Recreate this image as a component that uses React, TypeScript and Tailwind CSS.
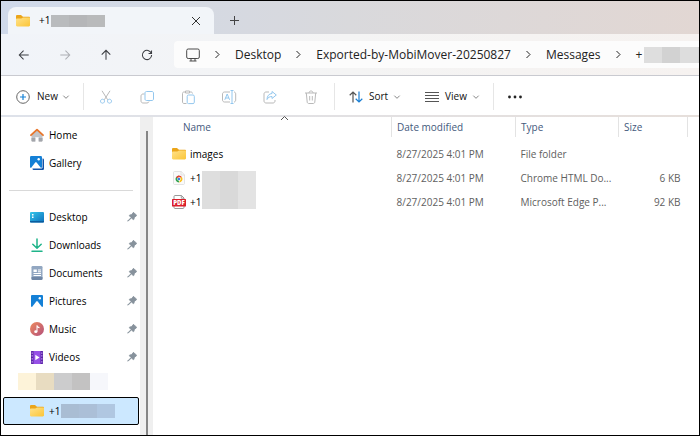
import React, { useState } from "react";

type IconProps = { className?: string };
type QuickLink = { name: string; icon: React.FC<IconProps> };
type FileRow = {
  name: string;
  icon: React.FC<IconProps>;
  modified: string;
  type: string;
  size: string;
  mask?: string;
};

const FolderIcon: React.FC<IconProps> = ({ className }) => (
  <svg viewBox="0 0 14 12" className={className} aria-hidden="true">
    <path d="M0 1.2C0 .5.5 0 1.2 0h3.3c.4 0 .7.1 1 .4L7 1.7h5.8c.7 0 1.2.5 1.2 1.2V6H0z" fill="#eba51a" />
    <path d="M0 4.300c0-.5.4-.8.8-.8h4.400c.4 0 .7-.1 1-.4l.5-.4c.2-.2.5-.3.8-.3h5.5c.6 0 1 .4 1 1v6.8c0 .7-.5 1.200-1.200 1.200H1.200C.5 11.400 0 10.900 0 10.200z" fill="url(#folderFill)" />
    <defs>
      <linearGradient id="folderFill" x1="0" y1="0" x2="1" y2="1">
        <stop offset="0" stopColor="#ffe28c" />
        <stop offset="1" stopColor="#fbc537" />
      </linearGradient>
    </defs>
  </svg>
);

const HomeIcon: React.FC<IconProps> = ({ className }) => (
  <svg viewBox="0 0 14 14" className={className} aria-hidden="true">
    <path d="M1.500 6.500 7 2l5.500 4.500V12.500c0 .6-.4 1-1 1H8.700V9.300H5.300v4.200H2.500c-.6 0-1-.4-1-1z" fill="#c2c4c8" />
    <path d="M1.500 10h3.800v3.500H2.500c-.6 0-1-.4-1-1zM8.700 10h3.800v2.500c0 .6-.4 1-1 1H8.700z" fill="#a3a6ab" />
    <path d="M1 7.200 7 1.700l6 5.500" fill="none" stroke="#e8752a" strokeWidth="1.800" strokeLinecap="round" strokeLinejoin="round" />
  </svg>
);

const GalleryIcon: React.FC<IconProps> = ({ className }) => (
  <svg viewBox="0 0 14 14" className={className} aria-hidden="true">
    <rect x="2.500" y="2.500" width="11.500" height="11.500" rx="1.200" fill="#1253a8" />
    <rect x="0" y="0" width="12.500" height="12.500" rx="1.200" fill="#fff" />
    <rect x="0" y="0" width="12" height="12" rx="1.200" fill="#1480d6" />
    <path d="M1 12 5.200 6.600c.4-.5 1-.5 1.400 0L11 12z" fill="#fff" />
    <circle cx="8.700" cy="3.300" r="1.200" fill="#fff" />
  </svg>
);

const DesktopIcon: React.FC<IconProps> = ({ className }) => (
  <svg viewBox="0 0 14 14" className={className} aria-hidden="true">
    <defs>
      <linearGradient id="desktopFill" x1="0" y1="0" x2="1" y2="1">
        <stop offset="0" stopColor="#35c7ea" />
        <stop offset="1" stopColor="#0c6fbd" />
      </linearGradient>
    </defs>
    <rect x="0" y="2" width="14" height="10.500" rx="1" fill="url(#desktopFill)" />
    <path d="M2 4h1.500v1.500H2zM2 6.500h1.500V8H2z" fill="#fff" />
    <path d="M0 11h14v.5c0 .6-.4 1-1 1H1c-.6 0-1-.4-1-1z" fill="#0b5c9e" />
  </svg>
);

const DownloadsIcon: React.FC<IconProps> = ({ className }) => (
  <svg viewBox="0 0 14 14" className={className} fill="none" stroke="#1fb489" strokeWidth="1.500" strokeLinecap="round" strokeLinejoin="round" aria-hidden="true">
    <path d="M7 1v9M2.800 6.200 7 10.200l4.200-4M2 13.200h10" />
  </svg>
);

const DocumentsIcon: React.FC<IconProps> = ({ className }) => (
  <svg viewBox="0 0 14 14" className={className} aria-hidden="true">
    <rect x="1.500" y="0" width="11" height="14" rx="1.200" fill="#92a7c1" />
    <path d="M1.500 11h11v1.800c0 .7-.5 1.200-1.200 1.200H2.700c-.7 0-1.200-.5-1.200-1.200z" fill="#6f86a5" />
    <path d="M3.500 3.500h3.300V6H3.500zM8 3.500h3V4.500H8zM8 5.200h3V6.200H8zM3.500 7H11v1H3.500zM3.500 9H11v1H3.500z" fill="#fff" />
  </svg>
);

const PicturesIcon: React.FC<IconProps> = ({ className }) => (
  <svg viewBox="0 0 14 14" className={className} aria-hidden="true">
    <rect x="1" y="1" width="12" height="12" rx="1" fill="#1480d6" />
    <path d="M2 13 6.300 7.500c.4-.5 1-.5 1.400 0L12 13z" fill="#fff" />
    <circle cx="9.800" cy="4.200" r="1.200" fill="#fff" />
  </svg>
);

const MusicIcon: React.FC<IconProps> = ({ className }) => (
  <svg viewBox="0 0 14 14" className={className} aria-hidden="true">
    <defs>
      <linearGradient id="musicFill" x1="0" y1="0" x2="1" y2="1">
        <stop offset="0" stopColor="#ee8a5c" />
        <stop offset="1" stopColor="#b3507c" />
      </linearGradient>
    </defs>
    <circle cx="7" cy="7" r="7" fill="url(#musicFill)" />
    <ellipse cx="5.800" cy="9.700" rx="1.600" ry="1.400" fill="#fff" />
    <path d="M6.500 3.200h1c.1 1 1 1.500 2 1.700v1.300c-.8 0-1.500-.3-2-.7v4.200h-1z" fill="#fff" />
  </svg>
);

const VideosIcon: React.FC<IconProps> = ({ className }) => (
  <svg viewBox="0 0 14 14" className={className} aria-hidden="true">
    <rect x="1" y="1" width="12" height="13" rx="1" fill="#9650e6" />
    <path d="M1 2c0-.6.4-1 1-1h1.500v13H2c-.6 0-1-.4-1-1zM10.500 1H12c.6 0 1 .4 1 1v11c0 .6-.4 1-1 1h-1.500z" fill="#5b24a6" />
    <path d="M1.600 2.500h1.200v1.200H1.600zM1.600 5.300h1.200v1.200H1.600zM1.600 8.200h1.200v1.200H1.600zM1.600 11.200h1.200v1.200H1.600zM11.200 2.500h1.200v1.200h-1.200zM11.200 5.300h1.200v1.200h-1.200zM11.200 8.200h1.200v1.200h-1.200zM11.200 11.200h1.200v1.200h-1.200z" fill="#c9a4f5" />
    <path d="M5.300 4.800v5.400l4.300-2.700z" fill="#fff" />
  </svg>
);

const PinIcon: React.FC<IconProps> = ({ className }) => (
  <svg viewBox="0 0 10 10" className={className} aria-hidden="true">
    <path d="M6 .7c.3-.3.7-.3 1 0l2.300 2.300c.3.3.3.7 0 1L7.500 5.200 6.900 7.300c-.1.4-.5.5-.8.2L4.400 5.900 1 9.300l-.3-.3 3.400-3.400-1.600-1.700c-.3-.3-.2-.7.2-.8l2.100-.6z" fill="#87929c" stroke="#87929c" strokeWidth=".8" />
  </svg>
);

const ChromeFileIcon: React.FC<IconProps> = ({ className }) => (
  <svg viewBox="0 0 14 14" className={className} aria-hidden="true">
    <path d="M2.500.5h6.700l3.300 3.300v8.700c0 .6-.4 1-1 1h-9c-.6 0-1-.4-1-1v-11c0-.6.4-1 1-1z" fill="#fafafa" stroke="#dcdcdc" strokeWidth=".8" />
    <path d="M9 .5v3.500h3.500" fill="none" stroke="#dcdcdc" strokeWidth=".8" />
    <path d="M7 8V4.500L3.970 6.250a3.500 3.500 0 0 0 3.030 5.250z" fill="#34a352" />
    <path d="M10.030 6.250A3.500 3.500 0 0 1 7 11.500L8.400 8.500 7 6.250z" fill="#fbc116" />
    <path d="M3.970 6.250a3.500 3.500 0 0 1 6.060 0H7L7 8z" fill="#e34133" />
    <circle cx="7" cy="8" r="1.700" fill="#fff" />
    <circle cx="7" cy="8" r="1.250" fill="#3f7fea" />
  </svg>
);

const PdfFileIcon: React.FC<IconProps> = ({ className }) => (
  <svg viewBox="0 0 14 14" className={className} aria-hidden="true">
    <path d="M2 5V1.500c0-.5.4-1 1-1h6.500L12 3v2M2 10v2.500c0 .5.4 1 1 1h8c.6 0 1-.5 1-1V10" fill="#fff" stroke="#8d8d8d" strokeWidth=".9" />
    <path d="M9.300.5V3.200H12" fill="none" stroke="#8d8d8d" strokeWidth=".8" />
    <rect x="0" y="4" width="14" height="7.500" rx=".5" fill="#dc1f2b" />
    <text x="7" y="10" textAnchor="middle" fontSize="6" fontWeight="800" fontFamily="Open Sans, sans-serif" fill="#fff">PDF</text>
  </svg>
);

const Chevron: React.FC<{ direction: "right" | "down" | "up"; className?: string }> = ({ direction, className }) => {
  const paths = { right: "M2.500 1 6 4.500 2.500 8", down: "M1.500 3 4.500 6 7.500 3", up: "M1 6 4.500 2.500 8 6" };
  return (
    <svg viewBox="0 0 9 9" className={className} fill="none" stroke="currentColor" aria-hidden="true">
      <path d={paths[direction]} />
    </svg>
  );
};

const navButtons = [
  { label: "Back", color: "text-[#3b3d42]", d: "M12.500 7h-11M6.500 2l-5 5 5 5" },
  { label: "Forward", color: "text-[#acaeb3]", d: "M1.500 7h11M7.500 2l5 5-5 5" },
  { label: "Up", color: "text-[#3b3d42]", d: "M7 12.500v-11M2 6.500l5-5 5 5" },
  { label: "Refresh", color: "text-[#3b3d42]", d: "M12.100 5.200A5.400 5.400 0 1 0 12.400 7M12.300 1.800v3.500H8.800" },
];

const fileActions = [
  { label: "Cut", gray: "M3 .8l5.700 9M11 .8l-5.700 9", blue: "M3.500 9.200a2 2 0 1 0 .01 0zM10.500 9.200a2 2 0 1 0 .01 0z" },
  { label: "Copy", gray: "M4.500 4H3C2 4 1 4.800 1 6v5c0 1.200.9 2 2 2h4c1 0 1.800-.6 2-1.500", blue: "M6.500 1.500H12c.8 0 1.500.6 1.500 1.500v6c0 .8-.6 1.500-1.500 1.500H6.500C5.600 10.500 5 9.900 5 9V3c0-.9.6-1.500 1.500-1.500z" },
  { label: "Paste", gray: "M5.500 13.500H3c-.8 0-1.500-.6-1.500-1.500V3.500C1.500 2.600 2.100 2 3 2h1M9 2h1c.8 0 1.500.6 1.500 1.500M4.500 1h4v2h-4z", blue: "M7.500 5H12c.8 0 1.300.5 1.300 1.300v6c0 .8-.5 1.300-1.300 1.300H7.500c-.8 0-1.300-.5-1.300-1.300v-6C6.200 5.500 6.700 5 7.500 5z" },
  { label: "Rename", gray: "M8 2H2.500C1.400 2 .5 2.900.5 4v6c0 1.100.9 2 2 2H8M12 2c1 0 1.700.9 1.700 2v6c0 1.100-.7 2-1.700 2", blue: "M8.500.5h3M8.500 13.500h3M10 .5v13M2.800 9.800 5.200 4l2.400 5.800M3.600 8h3.200" },
  { label: "Share", gray: "M6 2H3C1.900 2 1 2.900 1 4v7c0 1.100.9 2 2 2h7c1.100 0 2-.9 2-2v-1", blue: "M9 1.500 13.300 5 9 8.500v-2C6.500 6.500 5 7.500 4 9.500c0-3.500 2-5.800 5-6z" },
  { label: "Delete", gray: "M1 3h12M5 3c0-2.700 4-2.700 4 0M2.300 3l.9 9c.1.900.7 1.500 1.500 1.500h4.600c.8 0 1.400-.6 1.500-1.500l.9-9M5.700 6v4.500M8.300 6v4.500", blue: "" },
];

const quickAccess: QuickLink[] = [
  { name: "Desktop", icon: DesktopIcon },
  { name: "Downloads", icon: DownloadsIcon },
  { name: "Documents", icon: DocumentsIcon },
  { name: "Pictures", icon: PicturesIcon },
  { name: "Music", icon: MusicIcon },
  { name: "Videos", icon: VideosIcon },
];

const files: FileRow[] = [
  { name: "images", icon: FolderIcon, modified: "8/27/2025 4:01 PM", type: "File folder", size: "" },
  { name: "+1", icon: ChromeFileIcon, modified: "8/27/2025 4:01 PM", type: "Chrome HTML Do...", size: "6 KB", mask: "self-end" },
  { name: "+1", icon: PdfFileIcon, modified: "8/27/2025 4:01 PM", type: "Microsoft Edge P...", size: "92 KB", mask: "self-start" },
];

const Blocks: React.FC<{ colors: string[]; className?: string }> = ({ colors, className }) => (
  <span className={`flex shrink-0 ${className || ""}`} aria-hidden="true">
    {colors.map((c, i) => (
      <span key={i} className={`w-[18px] ${c}`}></span>
    ))}
  </span>
);

const Divider: React.FC = () => <span className="w-px h-[27px] bg-[#e6e6e6]"></span>;

const TabStrip: React.FC = () => (
  <div className="flex items-end h-[33px] pl-[7px] bg-linear-to-r from-[#cfd9ea] via-[#d9d9dc] to-[#e2d7d3]">
    <div className="flex items-center w-[206px] h-[27px] pl-2 pr-[13px] rounded-t-lg bg-[#f2f5f9]">
      <FolderIcon className="w-[14px] h-3 mr-[9px]" />
      <span className="text-[10px] font-medium">+1</span>
      <Blocks colors={["bg-[#b9bbbd]", "bg-[#b5b6b8]", "bg-[#b9babb]"]} className="h-3 ml-px" />
      <button aria-label="Close tab" className="ml-auto">
        <svg viewBox="0 0 10 10" className="size-[10px]" fill="none" stroke="#333">
          <path d="M1 1l8 8M9 1 1 9" />
        </svg>
      </button>
    </div>
    <button aria-label="New tab" className="h-[27px] ml-4">
      <svg viewBox="0 0 9 9" className="size-[9px]" fill="none" stroke="#444">
        <path d="M4.500 0v9M0 4.500h9" />
      </svg>
    </button>
  </div>
);

const AddressBar: React.FC = () => (
  <div className="flex items-center h-[41px] pl-3 bg-linear-to-r from-[#f1f4f9] via-[#f4f4f4] to-[#f6f2f0]">
    <div className="flex gap-5 shrink-0">
      {navButtons.map((b) => (
        <button key={b.label} aria-label={b.label} className={`w-[21px] flex justify-center ${b.color}`}>
          <svg viewBox="0 0 14 14" className="size-3" fill="none" stroke="currentColor" strokeWidth="1.200">
            <path d={b.d} />
          </svg>
        </button>
      ))}
    </div>
    <nav aria-label="Address" className="flex grow items-center gap-[13px] min-w-0 h-[27px] ml-[17px] pl-3 overflow-hidden rounded-l bg-[#fcfcfc] text-xs text-[#222] whitespace-nowrap">
      <svg viewBox="0 0 14 14" className="size-[14px] shrink-0" fill="none" stroke="#4a4a4a" aria-hidden="true">
        <rect x=".7" y="1" width="12.600" height="9.500" rx="1.500" />
        <path d="M5 10.500v2.500M9 10.500v2.500M3.500 13h7" />
      </svg>
      <Chevron direction="right" className="size-[9px] shrink-0" />
      <a href="#desktop">Desktop</a>
      <Chevron direction="right" className="size-[9px] shrink-0" />
      <a href="#exported">Exported-by-MobiMover-20250827</a>
      <Chevron direction="right" className="size-[9px] shrink-0" />
      <a href="#messages">Messages</a>
      <Chevron direction="right" className="size-[9px] shrink-0" />
      <span className="flex items-center gap-[2px]">
        +
        <Blocks colors={["bg-[#dedede]", "bg-[#d2d2d2]", "bg-[#dddddd]", "bg-[#d6d6d6]"]} className="h-4" />
      </span>
    </nav>
  </div>
);

const Toolbar: React.FC = () => (
  <div className="flex items-center h-10 pl-[15px] pt-[2px] border-t border-[#c9cad0] bg-white text-[10px] text-[#111]">
    <button className="flex items-center">
      <svg viewBox="0 0 14 14" className="size-[14px] mr-[7px]" fill="none" aria-hidden="true">
        <circle cx="7" cy="7" r="6.300" stroke="#666" />
        <path d="M7 4v6M4 7h6" stroke="#1683d8" strokeWidth="1.200" />
      </svg>
      New
      <Chevron direction="down" className="size-2 ml-1 text-[#777]" />
    </button>
    <span className="flex ml-[13px]">
      <Divider />
    </span>
    <div className="flex gap-5 ml-3">
      {fileActions.map((a) => (
        <button key={a.label} aria-label={a.label} disabled className="w-[21px] flex justify-center">
          <svg viewBox="0 0 14 14" className="size-[14px] overflow-visible" fill="none" strokeWidth="1">
            <path d={a.gray} stroke="#b9b9b9" />
            <path d={a.blue} stroke="#93c7ee" />
          </svg>
        </button>
      ))}
    </div>
    <span className="flex ml-3">
      <Divider />
    </span>
    <button className="flex items-center ml-[14px]">
      <svg viewBox="0 0 14 12" className="w-[14px] h-3 mr-[6px]" fill="none" strokeWidth="1.200" aria-hidden="true">
        <path d="M4 11.500V1M.7 4.200 4 1l3.300 3.200" stroke="#555" />
        <path d="M10 .5V11M6.700 7.800 10 11l3.300-3.200" stroke="#1a7fd4" />
      </svg>
      Sort
      <Chevron direction="down" className="size-2 ml-[5px] text-[#777]" />
    </button>
    <button className="flex items-center ml-6">
      <svg viewBox="0 0 14 10" className="w-[14px] h-[10px] mr-[6px]" stroke="#555" aria-hidden="true">
        <path d="M0 .5h14M0 3.500h14M0 6.500h14M0 9.500h14" />
      </svg>
      View
      <Chevron direction="down" className="size-2 ml-[5px] text-[#777]" />
    </button>
    <span className="flex ml-[13px]">
      <Divider />
    </span>
    <button aria-label="More" className="ml-[14px]">
      <svg viewBox="0 0 14 4" className="w-[14px] h-1" fill="#222">
        <circle cx="1.500" cy="2" r="1.400" />
        <circle cx="7" cy="2" r="1.400" />
        <circle cx="12.500" cy="2" r="1.400" />
      </svg>
    </button>
  </div>
);

const Sidebar: React.FC = () => {
  const [selected, setSelected] = useState("export");

  const renderLink = (name: string, Icon: React.FC<IconProps>, pinned: boolean) => (
    <li key={name}>
      <button
        onClick={() => setSelected(name)}
        className={`flex items-center w-full h-7 pl-[29px] pr-[3px] ${selected === name ? "bg-[#cce8ff]" : ""}`}
      >
        <Icon className="size-[14px] mr-[5px]" />
        {name}
        {pinned && <PinIcon className="size-[10px] ml-auto" />}
      </button>
    </li>
  );

  return (
    <aside className="flex shrink-0 w-[154px] text-[10px] text-black">
      <div className="grow pt-1">
        <ul>
          {renderLink("Home", HomeIcon, false)}
          {renderLink("Gallery", GalleryIcon, false)}
        </ul>
        <hr className="mt-[13px] mb-3 ml-2 mr-[7px] border-[#d9d9d9]" />
        <ul>{quickAccess.map((q) => renderLink(q.name, q.icon, true))}</ul>
        <Blocks
          colors={["bg-[#fdf3d9]", "bg-[#e8dcc1]", "bg-[#cccccd]", "bg-[#c3c2c2]", "bg-[#f6f7fb]"]}
          className="h-[17px] ml-[17px] mt-[2px]"
        />
        <button
          onClick={() => setSelected("export")}
          className={`flex items-center w-[136px] h-7 mt-[7px] ml-[2px] pl-[26px] rounded-xs border border-black ${selected === "export" ? "bg-[#cce8ff]" : ""}`}
        >
          <FolderIcon className="w-[14px] h-3 mr-[5px]" />
          +1
          <Blocks colors={["bg-[#a9bdd3]", "bg-[#abbfd7]", "bg-[#b0c7e1]"]} className="h-[14px] ml-px" />
        </button>
      </div>
      <div className="flex justify-center w-[13px] mr-[2px] pt-[14px] bg-[#efefef]">
        <div className="w-[2px] bg-[#858585]"></div>
      </div>
    </aside>
  );
};

const FileList: React.FC = () => (
  <main className="grow min-w-0 pl-[17px] pr-[11px]">
    <table className="w-full table-fixed text-[10px] text-[#606060] text-left whitespace-nowrap">
      <thead className="text-[#44597d]">
        <tr className="h-5">
          <th className="p-0 pl-1 font-normal border-r border-[#e3e3e3]">
            <div className="relative pl-[7px]">
              Name
              <Chevron direction="up" className="absolute -top-[6px] left-1/2 size-[9px] -ml-1 text-[#555]" />
            </div>
          </th>
          <th className="w-[124px] p-0 pl-[5px] font-normal border-r border-[#e3e3e3]">Date modified</th>
          <th className="w-[103px] p-0 pl-[5px] font-normal border-r border-[#e3e3e3]">Type</th>
          <th className="w-[69px] p-0 pl-[5px] font-normal border-r border-[#e3e3e3]">Size</th>
        </tr>
      </thead>
      <tbody className="before:block before:h-[5px]">
        {files.map(({ icon: Icon, ...file }) => (
          <tr key={file.type} className="h-6">
            <td className="p-0">
              <div className="flex items-center h-6 text-black">
                <Icon className="size-[14px] mr-1" />
                {file.name}
                {file.mask && (
                  <Blocks
                    colors={["bg-[#dedede]", "bg-[#d9d9d9]", "bg-[#e3e3e3]"]}
                    className={`h-[19px] ml-px ${file.mask}`}
                  />
                )}
              </div>
            </td>
            <td className="p-0 pl-[5px]">{file.modified}</td>
            <td className="p-0 pl-[5px]">{file.type}</td>
            <td className="p-0 pr-[7px] text-right">{file.size}</td>
          </tr>
        ))}
      </tbody>
    </table>
  </main>
);

const App: React.FC = () => (
  <div className="flex flex-col min-h-screen border border-black bg-white font-['Open_Sans',sans-serif]">
    <TabStrip />
    <AddressBar />
    <Toolbar />
    <div className="h-[2px] bg-linear-to-r from-[#dee2ea] to-[#e6dfdb]"></div>
    <div className="flex grow">
      <Sidebar />
      <FileList />
    </div>
  </div>
);

export default App;
